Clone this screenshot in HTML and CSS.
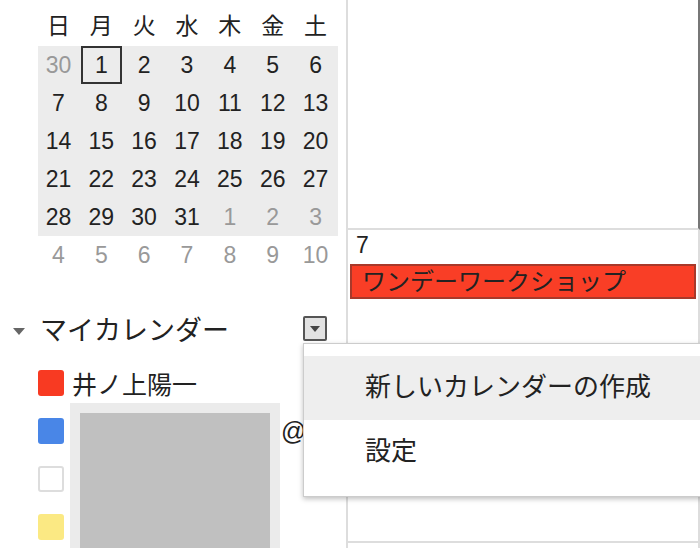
FILE: index.html
```html
<!DOCTYPE html>
<html>
    <head>
        <link rel="stylesheet" href="styles.css">
    </head>
<body>
<div class="page">
    <aside class="sidebar">
        <div class="mini-cal">
            <div class="mini-head">
                <span>日</span><span>月</span><span>火</span><span>水</span><span>木</span><span>金</span><span>土</span>
            </div>
            <div class="mini-body">
                <span class="other">30</span><span class="today">1</span><span>2</span><span>3</span><span>4</span><span>5</span><span>6</span>
                <span>7</span><span>8</span><span>9</span><span>10</span><span>11</span><span>12</span><span>13</span>
                <span>14</span><span>15</span><span>16</span><span>17</span><span>18</span><span>19</span><span>20</span>
                <span>21</span><span>22</span><span>23</span><span>24</span><span>25</span><span>26</span><span>27</span>
                <span>28</span><span>29</span><span>30</span><span>31</span><span class="other">1</span><span class="other">2</span><span class="other">3</span>
            </div>
            <div class="mini-tail">
                <span>4</span><span>5</span><span>6</span><span>7</span><span>8</span><span>9</span><span>10</span>
            </div>
        </div>

        <div class="section-head">
            <span class="caret"></span>
            <span class="section-title">マイカレンダー</span>
            <span class="menu-anchor">
                <span class="drop-btn"><span class="drop-tri"></span></span>
                <div class="menu">
                    <div class="menu-item active">新しいカレンダーの作成</div>
                    <div class="menu-item">設定</div>
                </div>
            </span>
        </div>

        <div class="cal-list">
            <span class="swatch red"></span>
            <span class="cal-name">井ノ上陽一</span>
            <span></span>

            <span class="swatch blue"></span>
            <div class="hidden-block"><div class="hidden-inner"></div></div>
            <span class="at">@</span>

            <span class="swatch white"></span>
            <span></span>

            <span class="swatch yellow"></span>
            <span></span>
        </div>
    </aside>

    <main class="grid">
        <div class="cell cell-top"></div>
        <div class="cell cell-day">
            <div class="day-num">7</div>
            <div class="event">ワンデーワークショップ</div>
        </div>
        <div class="cell cell-next"></div>
    </main>
</div>
</body>
</html>
```

FILE: styles.css
```css
body {
    margin: 0;
    overflow: hidden;
    background: #fff;
    color: #222;
    font-family: 'Liberation Sans', 'Noto Sans CJK JP', sans-serif;
}

.page {
    display: flex;
    width: 700px;
    height: 548px;
}

/* Sidebar */
.sidebar {
    width: 346px;
    flex: none;
}

.mini-cal {
    margin: 6px 0 0 38px;
    width: 300px;
    font-size: 23px;
}

.mini-head,
.mini-body,
.mini-tail {
    display: grid;
    grid-template-columns: repeat(7, 1fr);
    text-align: center;
}

.mini-head span {
    height: 40px;
    line-height: 40px;
    margin-left: -2px;
}

.mini-body {
    background: #ececec;
}

.mini-body span,
.mini-tail span {
    height: 38px;
    line-height: 38px;
    margin-left: -2px;
}

.mini-tail span,
.mini-body .other {
    color: #999;
}

.mini-body .today {
    box-shadow: inset 0 0 0 2px #333;
    margin: 0 2px 0 0;
}

/* My calendars */
.section-head {
    display: flex;
    align-items: center;
    height: 30px;
    margin-top: 42px;
    padding: 0 19px 0 13px;
}

.caret {
    width: 0;
    height: 0;
    border-left: 6px solid transparent;
    border-right: 6px solid transparent;
    border-top: 7px solid #666;
    margin-right: 15px;
}

.section-title {
    font-size: 27px;
    line-height: 30px;
    color: #222;
}

.menu-anchor {
    margin-left: auto;
    align-self: flex-start;
    position: relative;
}

.drop-btn {
    display: flex;
    align-items: center;
    justify-content: center;
    width: 20px;
    height: 21px;
    background: #e2e2e2;
    border: 2px solid #555;
    border-radius: 2px;
}

.drop-tri {
    width: 0;
    height: 0;
    border-left: 5px solid transparent;
    border-right: 5px solid transparent;
    border-top: 6px solid #444;
}

.menu {
    position: absolute;
    top: 27px;
    left: 0;
    width: 420px;
    padding: 12px 0 12px;
    background: #fff;
    border: 1px solid #ccc;
    box-shadow: 0 2px 5px rgba(0, 0, 0, 0.25);
    z-index: 2;
}

.menu-item {
    height: 64px;
    line-height: 62px;
    padding-left: 61px;
    font-size: 26px;
    color: #222;
}

.menu-item.active {
    background: #eee;
}

.cal-list {
    display: grid;
    grid-template-columns: 32px 210px auto;
    grid-auto-rows: 48px;
    align-items: center;
    margin: 13px 0 0 38px;
    font-size: 25px;
}

.swatch {
    width: 26px;
    height: 26px;
    border-radius: 3px;
    box-sizing: border-box;
}

.swatch.red { background: #f83a22; }
.swatch.blue { background: #4986e7; }
.swatch.white { border: 2px solid #ddd; background: #fff; }
.swatch.yellow { background: #fbe983; }

.cal-name {
    padding-left: 2px;
    white-space: nowrap;
}

.hidden-block {
    grid-row: 2 / span 3;
    grid-column: 2;
    align-self: stretch;
    margin-top: -4px;
    padding: 10px 10px 0;
    background: #ebebeb;
}

.hidden-inner {
    height: 100%;
    background: #c0c0c0;
}

.at {
    grid-row: 2;
    grid-column: 3;
    padding-left: 1px;
    font-size: 25px;
}

/* Main grid */
.grid {
    flex: 1;
    display: flex;
    flex-direction: column;
    border-left: 2px solid #ddd;
}

.cell {
    border-right: 2px solid #ddd;
    border-bottom: 2px solid #ddd;
}

.cell-top {
    height: 228px;
    border-right-color: #777;
}

.cell-day {
    height: 311px;
    padding: 0 2px;
}

.day-num {
    height: 30px;
    line-height: 30px;
    padding-left: 6px;
    font-size: 23px;
}

.event {
    margin-top: 4px;
    height: 31px;
    line-height: 31px;
    padding-left: 10px;
    background: #f93e26;
    border: 2px solid #a8392a;
    color: #222;
    font-size: 24px;
    white-space: nowrap;
    overflow: hidden;
}

.cell-next {
    flex: 1;
    border-bottom: none;
}
```
